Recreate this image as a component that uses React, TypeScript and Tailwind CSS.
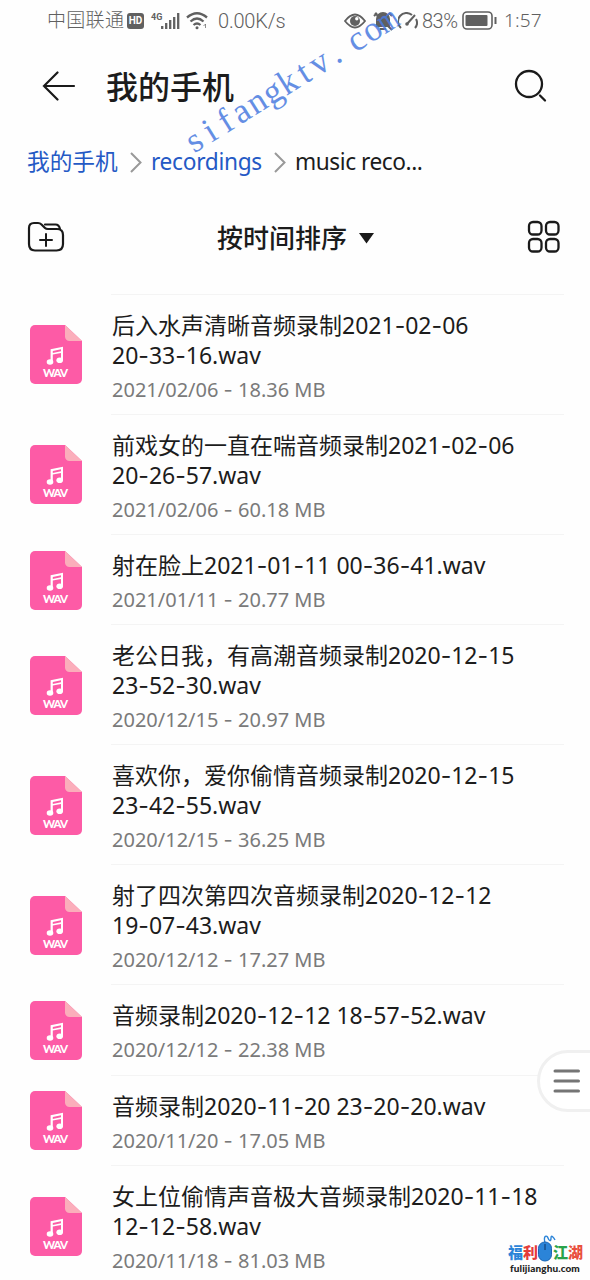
import React from "react";

const files = [
  { lines: ["后入水声清晰音频录制2021-02-06", "20-33-16.wav"], meta: "2021/02/06 - 18.36 MB" },
  { lines: ["前戏女的一直在喘音频录制2021-02-06", "20-26-57.wav"], meta: "2021/02/06 - 60.18 MB" },
  { lines: ["射在脸上2021-01-11 00-36-41.wav"], meta: "2021/01/11 - 20.77 MB" },
  { lines: ["老公日我，有高潮音频录制2020-12-15", "23-52-30.wav"], meta: "2020/12/15 - 20.97 MB" },
  { lines: ["喜欢你，爱你偷情音频录制2020-12-15", "23-42-55.wav"], meta: "2020/12/15 - 36.25 MB" },
  { lines: ["射了四次第四次音频录制2020-12-12", "19-07-43.wav"], meta: "2020/12/12 - 17.27 MB" },
  { lines: ["音频录制2020-12-12 18-57-52.wav"], meta: "2020/12/12 - 22.38 MB" },
  { lines: ["音频录制2020-11-20 23-20-20.wav"], meta: "2020/11/20 - 17.05 MB" },
  { lines: ["女上位偷情声音极大音频录制2020-11-18", "12-12-58.wav"], meta: "2020/11/18 - 81.03 MB" },
];

/* Hyphens take the wider Inter glyph. */
function Label({ text }: { text: string }) {
  return (
    <>
      {text.split(/(-)/).map((part, i) =>
        part === "-" ? (
          <span key={i} className="font-['Inter',sans-serif]">-</span>
        ) : (
          part
        ),
      )}
    </>
  );
}

function WavIcon() {
  return (
    <svg width="52" height="59" viewBox="0 0 52 59" className="mt-[2px] shrink-0">
      <path d="M5 0H35L52 16V54a5 5 0 0 1-5 5H5a5 5 0 0 1-5-5V5a5 5 0 0 1 5-5z" fill="#fd5ba6" />
      <path d="M35 0L52 16H39.500a4.500 4.500 0 0 1-4.500-4.500z" fill="#fbaebb" />
      <g fill="#fff">
        <ellipse cx="20" cy="37" rx="3.300" ry="2.800" />
        <ellipse cx="29.700" cy="35.200" rx="3.300" ry="2.800" />
        <path d="M20.600 24.200L33 21.700V35.200H31V28L22.800 29.600V37H20.600zM22.800 26v1.900L31 26.200v-1.900z" fillRule="evenodd" />
      </g>
      <text x="25.500" y="52" textAnchor="middle" fill="#fff" fontFamily="Lato, sans-serif" fontWeight="900" fontSize="11.500" textLength="25">WAV</text>
    </svg>
  );
}

function StatusBar() {
  return (
    <div className="flex h-[41px] items-center pl-[47px] font-['Noto_Sans','Noto_Sans_CJK_SC',sans-serif] text-[19px] font-light text-[#606060]">
      <span className="w-[80px] whitespace-nowrap tracking-[0.3px]">中国联通</span>
      <span className="flex h-[16px] w-[17px] items-center justify-center rounded-[3px] bg-[#606060] font-['Roboto',sans-serif] text-[10px] font-bold text-white">HD</span>
      <svg width="31" height="20" viewBox="0 0 31 20" className="ml-[6px] shrink-0">
        <text x="1" y="8.500" fontFamily="Roboto, sans-serif" fontWeight="700" fontSize="9" fill="#606060">4G</text>
        <path d="M12.200 18v-3M16.200 18v-6M20.200 18v-9M24.200 18V6M28.200 18V2" stroke="#606060" strokeWidth="2.300" />
      </svg>
      <svg width="24" height="20" viewBox="0 0 24 20" className="ml-[5px] shrink-0" fill="none" stroke="#606060" strokeWidth="2.300">
        <path d="M1 6.500Q11 -2 21 6.500M4.500 10.500Q11 4.500 17.500 10.500M7.500 14Q11 11 14.500 14" />
        <circle cx="11" cy="16.800" r="1.500" fill="#606060" stroke="none" />
        <path d="M17.500 15l2-2v4" strokeWidth="1" opacity=".7" />
      </svg>
      <span className="ml-[8px] w-[68px] whitespace-nowrap font-['Roboto',sans-serif] text-[20px] font-light tracking-[-0.2px]">0.00K/s</span>
      <svg width="22" height="16" viewBox="0 0 22 16" className="ml-[58px] shrink-0" fill="none" stroke="#606060" strokeWidth="1.800">
        <path d="M1 8Q11-5 21 8Q11 21 1 8z" />
        <circle cx="11" cy="8" r="5" fill="#606060" stroke="none" />
        <circle cx="12.800" cy="5.800" r="1.700" fill="#fff" stroke="none" />
      </svg>
      <svg width="22" height="20" viewBox="0 0 22 20" className="ml-[6px] shrink-0" fill="none" stroke="#606060" strokeWidth="2">
        <path d="M5 15V8a6 6 0 0 1 12 0v7z" fill="#606060" />
        <path d="M8 18h6M2 5l3-3M20 5l-3-3M3 2l17 17" />
      </svg>
      <svg width="20" height="18" viewBox="0 0 20 18" className="ml-[4px] shrink-0" fill="none" stroke="#606060" strokeWidth="2">
        <path d="M3 16A8 8 0 0 1 14 3M18 7a8 8 0 0 1-1 9M9 12l8-9" />
        <circle cx="9" cy="12" r="1.800" fill="#606060" stroke="none" />
      </svg>
      <span className="ml-[4px] w-[38px] whitespace-nowrap font-['Roboto',sans-serif] text-[20px] font-light tracking-[-0.5px]">83%</span>
      <svg width="35" height="19" viewBox="0 0 35 19" className="ml-[2px] shrink-0">
        <rect x="1" y="1" width="29" height="17" rx="4" fill="none" stroke="#606060" strokeWidth="1.600" />
        <rect x="3.500" y="4" width="22" height="11" rx="1" fill="#606060" />
        <path d="M33.500 6v7" stroke="#606060" strokeWidth="2" />
      </svg>
      <span className="ml-[7px] whitespace-nowrap tracking-[0.1px]">1:57</span>
    </div>
  );
}

function Chevron() {
  return (
    <svg width="12" height="21" viewBox="0 0 12 21" fill="none" stroke="#999" strokeWidth="2" className="shrink-0">
      <path d="M1 1l9.500 9.500L1 20" />
    </svg>
  );
}

export default function App() {
  return (
    <main className="relative h-[1280px] w-[590px] overflow-hidden bg-[#fefefe] font-['Noto_Sans','Noto_Sans_CJK_SC',sans-serif] text-[#1c1c1c]">
      <StatusBar />
      <header className="flex h-[90px] items-center pl-[42px] pr-[43px]">
        <svg width="34" height="30" viewBox="0 0 34 30" fill="none" stroke="#1a1a1a" strokeWidth="2.200" strokeLinecap="round">
          <path d="M32 15H2M15.500 1.500L2 15L15.500 28.500" />
        </svg>
        <h1 className="ml-[30px] mt-[2px] flex-1 text-[32px] font-medium leading-[44px]">我的手机</h1>
        <svg width="34" height="34" viewBox="0 0 34 34" fill="none" stroke="#1a1a1a" strokeWidth="2.300" strokeLinecap="round">
          <circle cx="16" cy="15" r="13" />
          <path d="M27 26.500l5 5" />
        </svg>
      </header>
      <nav className="flex h-[62px] items-center whitespace-nowrap pl-[27px] pt-px text-[22.700px]">
        <span className="w-[103px] text-[#2459c5]">我的手机</span>
        <Chevron />
        <span className="ml-[9px] w-[123px] tracking-[-0.300px] text-[#2459c5]">recordings</span>
        <Chevron />
        <span className="ml-[9px] tracking-[-0.450px]">music reco...</span>
      </nav>
      <div className="flex h-[88px] items-center pl-[27px] pr-[29px]">
        <svg width="38" height="31" viewBox="0 0 38 31" className="-mt-[2px]" fill="none" stroke="#1a1a1a" strokeWidth="2.200" strokeLinecap="round" strokeLinejoin="round">
          <path d="M7 2H11Q13 2 14.500 3.500L18 7Q19 8 21 8H30Q36 8 36 14V23Q36 29.500 29.500 29.500H8Q2 29.500 2 23V7Q2 2 7 2zM18 3.500H28.500Q32 3.500 33 8" />
          <path d="M19 13v12M13 19h12" strokeWidth="2" />
        </svg>
        <div className="ml-[152px] mt-[2px] flex flex-1 items-center text-[26px] font-medium">
          <span className="w-[142px] whitespace-nowrap">按时间排序</span>
          <svg width="15" height="11" viewBox="0 0 15 11"><path d="M0 0H15L7.500 10.500z" fill="#1a1a1a" /></svg>
        </div>
        <svg width="34" height="34" viewBox="0 0 34 34" fill="none" stroke="#1a1a1a" strokeWidth="2.300">
          <rect x="2" y="2" width="12.500" height="12.500" rx="4" />
          <rect x="19" y="2" width="12.500" height="12.500" rx="4" />
          <rect x="2" y="19" width="12.500" height="12.500" rx="4" />
          <rect x="19" y="19" width="12.500" height="12.500" rx="4" />
        </svg>
      </div>
      <ul className="mt-[13px]">
        {files.map((f) => (
          <li key={f.meta} className={`flex items-center pl-[30px] pr-[26px] ${f.lines.length > 1 ? "h-[119.900px]" : "h-[90.600px]"}`}>
            <WavIcon />
            <div className="ml-[29px] flex h-full flex-1 flex-col whitespace-nowrap border-t border-[#f4f4f4] pl-px pt-[16px]">
              <div className="text-[23px] leading-[29px]">
                {f.lines.map((l) => (
                  <div key={l}><Label text={l} /></div>
                ))}
              </div>
              <div className="mt-[5px] text-[20px] leading-[28px] text-[#7a7a7a]">
                <Label text={f.meta} />
              </div>
            </div>
          </li>
        ))}
      </ul>

      <button className="absolute right-[-4px] top-[1050px] flex h-[62px] w-[57px] items-center rounded-l-full border-[3px] border-[#f0f0f0] bg-white pl-[13px]" aria-label="menu">
        <svg width="28" height="24" viewBox="0 0 28 24" stroke="#757575" strokeWidth="3" strokeLinecap="round">
          <path d="M2 2H25.500M2 12H25.500M2 22H25.500" />
        </svg>
      </button>

      <div className="absolute left-[195px] top-[127px] flex origin-[0_100%] -rotate-[32deg] whitespace-pre font-['Liberation_Serif',serif] text-[35px] leading-[32px] text-[#4a7be0] opacity-85">
        {"sifangktv. com".split("").map((c, i) => (
          <span key={i} className={c === " " ? "w-[7px]" : c === "m" ? "flex w-[18px] origin-center scale-x-[0.72] justify-center" : "flex w-[18.400px] justify-center"}>{c}</span>
        ))}
      </div>

      <div className="absolute left-[508px] top-[1235px] flex w-[76px] flex-col items-start">
        <div className="flex h-[27px] items-end whitespace-nowrap font-['Noto_Sans_CJK_SC',sans-serif] text-[15px] font-black leading-[21px]">
          <span className="w-[15px] text-[#2b84d8]">福</span>
          <span className="w-[15px] text-[#e43c3a]">利</span>
          <svg width="15" height="27" viewBox="0 0 15 27" className="shrink-0 overflow-visible">
            <path d="M7 8C5 0 9 0 10 3S13 7 13 3S16 3 17 5" fill="none" stroke="#2b84d8" strokeWidth="1.400" />
            <rect x="0.500" y="7" width="13" height="19" rx="6.300" fill="#2b84d8" stroke="#1b66b4" />
            <path d="M7 9v6" stroke="#174f8c" strokeWidth="1.500" />
          </svg>
          <span className="w-[15px] text-[#29a34a]">江</span>
          <span className="w-[15px] text-[#e9503f]">湖</span>
        </div>
        <span className="ml-[2px] mt-px whitespace-nowrap font-['Lato',sans-serif] text-[10px] font-black leading-[10px] tracking-[0.1px] text-[#222]">fulijianghu.com</span>
      </div>
    </main>
  );
}
